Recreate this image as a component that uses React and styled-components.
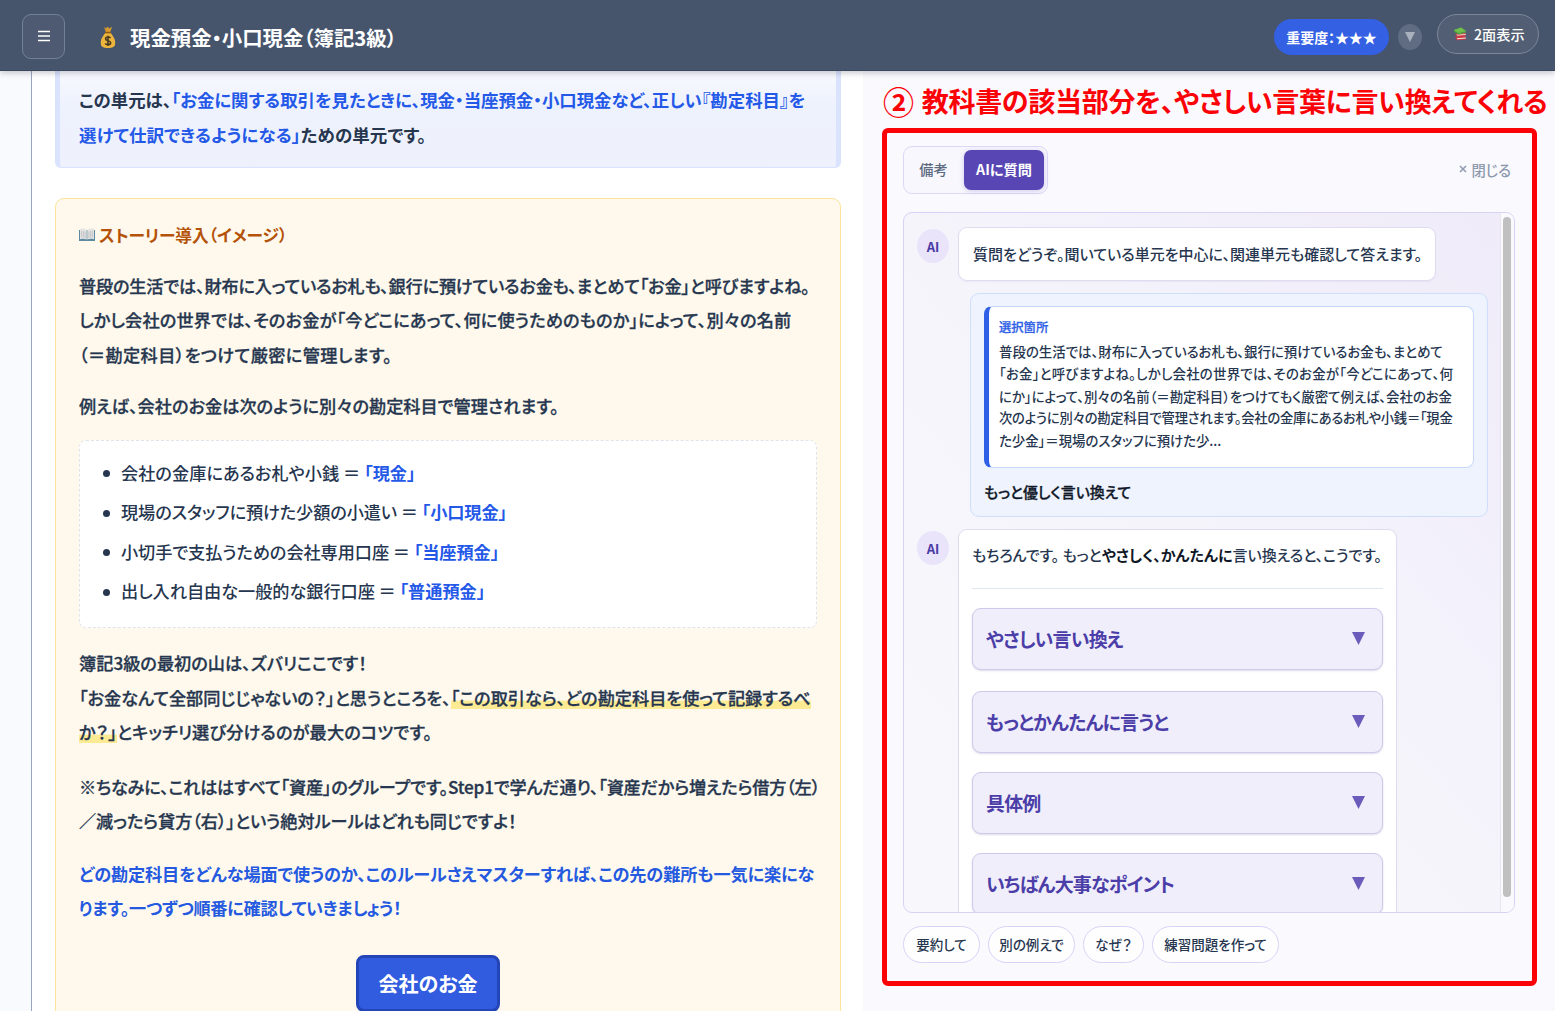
import React from "react";
import styled, { createGlobalStyle } from "styled-components";

const Global = createGlobalStyle`
  *, *::before, *::after { box-sizing: border-box; }
  body {
    margin: 0;
    overflow: hidden;
    font-family: "Noto Sans CJK JP", sans-serif;
    font-feature-settings: "palt";
    color: #26364f;
    background: #fff;
  }
  button { font: inherit; font-feature-settings: inherit; color: inherit; margin: 0; padding: 0; }
  svg { display: block; flex: none; }
`;

const Page = styled.div`
  height: 1011px;
  display: flex;
  flex-direction: column;
  overflow: hidden;
`;

/* ---------- header ---------- */
const Header = styled.header`
  flex: none;
  height: 71px;
  display: flex;
  align-items: flex-start;
  padding: 14px 16px 0 22px;
  background: #46546c;
  border-bottom: 1px solid #3a4860;
  box-shadow: 0 2px 6px rgba(60, 60, 80, 0.28);
  position: relative;
  z-index: 2;
  color: #fff;
`;
const MenuButton = styled.button`
  width: 43px;
  height: 45px;
  display: grid;
  place-items: center;
  padding-bottom: 2px;
  border: 1px solid #748096;
  border-radius: 9px;
  background: #4d5a71;
`;
const BagSlot = styled.span`
  margin: 12px 0 0 35px;
`;
const Title = styled.h1`
  flex: 1;
  margin: 8px 0 0 14px;
  font-size: 20.4px;
  font-weight: 700;
  line-height: 30px;
  white-space: nowrap;
`;
const Importance = styled.span`
  width: 115px;
  height: 36px;
  margin-top: 5px;
  display: flex;
  align-items: center;
  justify-content: center;
  border-radius: 18px;
  background: #3460e4;
  font-size: 14px;
  font-weight: 700;
  letter-spacing: -0.1px;
  white-space: nowrap;
`;
const RoundToggle = styled.button`
  width: 24px;
  height: 26px;
  margin: 10px 15px 0 9px;
  display: grid;
  place-items: center;
  border: 0;
  border-radius: 50%;
  background: #606c81;
`;
const DualView = styled.button`
  width: 102px;
  height: 40px;
  display: flex;
  align-items: center;
  padding-left: 16px;
  gap: 7px;
  border: 1px solid #7c8799;
  border-radius: 20px;
  background: #525e73;
  font-size: 14.2px;
  font-weight: 500;
  white-space: nowrap;
`;

/* ---------- body ---------- */
const Body = styled.div`
  flex: 1;
  min-height: 0;
  display: flex;
`;
const Gutter = styled.div`
  flex: none;
  width: 32px;
  background: #f9fafd;
  border-right: 1px solid #9aa6c0;
`;
const Lesson = styled.main`
  flex: none;
  width: 831px;
  padding: 0 22px 0 23px;
  background: #fff;
  overflow: hidden;
`;
const GoalBox = styled.section`
  height: 97px;
  padding: 11px 0 0 19px;
  border: solid #d9e3fd;
  border-width: 0 5px 1px;
  border-radius: 0 0 6px 6px;
  background: linear-gradient(#f8f9fe, #eef2fd 35%, #eef1fc);
`;
const Line = styled.div`
  height: ${(p) => p.$h || 34.3}px;
  line-height: ${(p) => p.$h || 34.3}px;
  font-size: ${(p) => p.$s || 17.2}px;
  font-weight: ${(p) => p.$w || 500};
  letter-spacing: ${(p) => p.$ls || 0}px;
  color: ${(p) => p.$c || "inherit"};
  -webkit-text-stroke: ${(p) => p.$k || 0}px;
  white-space: nowrap;
`;
const Strong = styled.b`
  font-weight: 700;
  color: #101828;
`;
const Blue = styled.b`
  font-weight: 700;
  color: #2459e8;
  -webkit-text-stroke: 0;
`;
const StoryCard = styled.section`
  height: 900px;
  margin-top: 30px;
  padding: 19px 23px 0;
  border: 1px solid #fce49a;
  border-radius: 9px;
  background: #fef9ec;
`;
const StoryHeading = styled.h2`
  margin: 0 0 18px;
  height: 33px;
  display: flex;
  align-items: center;
  gap: 4px;
  font-size: 16.7px;
  font-weight: 700;
  color: #b45209;
  white-space: nowrap;
`;
const Paragraph = styled.div`
  margin-bottom: ${(p) => p.$mb}px;
`;
const AccountList = styled.ul`
  height: 188px;
  margin: 0 0 18px;
  padding: 12px 0 0 23px;
  list-style: none;
  border: 1px dashed #dfe3ea;
  border-radius: 7px;
  background: #fff;
`;
const Account = styled.li`
  display: flex;
  align-items: center;
  gap: 11px;
  height: 39.4px;
  &::before {
    content: "";
    width: 7px;
    height: 7px;
    border-radius: 50%;
    background: #26364f;
    margin-top: 2px;
  }
`;
const Marker = styled.mark`
  color: inherit;
  padding: 0;
  background: linear-gradient(transparent 58%, #fdeb94 62%) 0 3px / 100% 21px no-repeat;
`;
const MoneyButton = styled.button`
  display: block;
  width: 144px;
  height: 57px;
  margin-left: 277px;
  border: 3px solid #2445b8;
  border-radius: 8px;
  background: #325ce0;
  color: #fff;
  font-size: 20px;
  font-weight: 700;
`;

/* ---------- right pane ---------- */
const Side = styled.aside`
  flex: 1;
  min-width: 0;
  padding: 10px 0 0 19px;
  background: #faf9fe;
`;
const Callout = styled.p`
  display: flex;
  align-items: center;
  gap: 8px;
  margin: 0 0 7px 1px;
  height: 40px;
  line-height: 38px;
  font-size: 27px;
  font-weight: 700;
  letter-spacing: -0.28px;
  color: #fb0207;
  white-space: nowrap;
`;
const CalloutNumber = styled.span`
  font-size: 31px;
`;
const Frame = styled.section`
  width: 655px;
  height: 858px;
  padding: 13px 15px 0 16px;
  border: 5px solid #fb0207;
  border-radius: 6px;
  background: #faf9fe;
`;
const Toolbar = styled.div`
  display: flex;
  justify-content: space-between;
  align-items: center;
  padding-right: 6px;
`;
const Tabs = styled.div`
  width: 145px;
  height: 48px;
  display: flex;
  padding: 3px;
  border: 1px solid #ddd8f6;
  border-radius: 9px;
  background: #f8f7fe;
`;
const Tab = styled.button`
  width: ${(p) => (p.$on ? 80 : 57)}px;
  height: 40px;
  padding: 0 ${(p) => (p.$on ? 0 : 4)}px 2px 0;
  border: 0;
  border-radius: 7px;
  background: ${(p) => (p.$on ? "#5746b4" : "transparent")};
  color: ${(p) => (p.$on ? "#fff" : "#5c6a80")};
  font-size: 14.2px;
  font-weight: ${(p) => (p.$on ? 700 : 500)};
  box-shadow: ${(p) => (p.$on ? "0 1px 5px rgba(87,70,180,.25)" : "none")};
  white-space: nowrap;
`;
const Close = styled.button`
  display: flex;
  align-items: center;
  gap: 4px;
  padding-bottom: 2px;
  border: 0;
  background: none;
  font-size: 14.3px;
  font-weight: 500;
  color: #8e9aae;
`;
const Chat = styled.div`
  width: 612px;
  height: 701px;
  margin-top: 18px;
  display: flex;
  border: 1px solid #d8d3f4;
  border-radius: 9px;
  background: linear-gradient(to top right, #f8f8fc 0%, #f5f4fb 50%, #efebf9 100%);
  overflow: hidden;
`;
const Messages = styled.div`
  flex: 1;
  min-width: 0;
  padding: 14px 12px 0 13px;
  overflow: hidden;
`;
const Track = styled.div`
  flex: none;
  width: 14px;
  padding: 4px 2px 0 2px;
  background: #faf9fd;
  border-left: 1px solid #e7e5ee;
`;
const Thumb = styled.div`
  width: 8px;
  height: 680px;
  border-radius: 4px;
  background: #c0c0c0;
`;
const MessageRow = styled.div`
  display: flex;
  gap: 9px;
  align-items: flex-start;
`;
const Avatar = styled.span`
  flex: none;
  width: 32px;
  height: 34px;
  margin-top: 2px;
  display: grid;
  place-items: center;
  border-radius: 50%;
  background: #e9e4fa;
  color: #4b3aa6;
  font-size: 13px;
  font-weight: 700;
`;
const Bubble = styled.div`
  flex: none;
  width: ${(p) => p.$width}px;
  height: ${(p) => p.$height}px;
  padding: 0 13px 0 ${(p) => p.$pl}px;
  border: 1px solid #e0dcf0;
  border-radius: 9px;
  background: #fff;
  box-shadow: 0 1px 2px rgba(80, 70, 140, 0.06);
`;
const UserBubble = styled.div`
  width: 518px;
  height: 224px;
  margin: 12px 0 12px 53px;
  padding: 12px 13px 0;
  border: 1px solid #cfdffb;
  border-radius: 9px;
  background: #eef3fd;
`;
const Quote = styled.blockquote`
  height: 162px;
  margin: 0 0 7px;
  padding: 11px 0 0 10px;
  border: 1px solid #c6d9fb;
  border-left: 5px solid #2f5fe6;
  border-radius: 8px;
  background: #fff;
`;
const QuoteText = styled.div`
  padding-top: 3px;
`;
const Rule = styled.hr`
  height: 1px;
  margin: 8px 0 19px;
  border: 0;
  background: #e0e6ef;
`;
const Accordion = styled.button`
  width: 411px;
  height: 62px;
  margin-bottom: ${(p) => p.$mb}px;
  padding: 0 17px 2px 13px;
  display: flex;
  justify-content: space-between;
  align-items: center;
  border: 1px solid #cdcaea;
  border-radius: 9px;
  background: #f1eefb;
  box-shadow: 0 1px 2px rgba(80, 70, 150, 0.2);
  color: #4b3ea8;
  font-size: 19px;
  font-weight: 700;
  letter-spacing: -0.84px;
`;
const Chips = styled.div`
  margin-top: 13px;
  display: flex;
  gap: 8px;
`;
const Chip = styled.button`
  width: ${(p) => p.$width}px;
  height: 37px;
  padding-bottom: 2px;
  border: 1px solid #d9d2f7;
  border-radius: 19px;
  background: #fefeff;
  font-size: 13.5px;
  font-weight: 500;
  white-space: nowrap;
`;

/* ---------- icons ---------- */
const Triangle = ({ size, color }) => (
  <svg width={size} height={size} viewBox="0 0 12 12">
    <path d="M0 0H12L6 12Z" fill={color} />
  </svg>
);
const MoneyBag = () => (
  <svg width="16" height="23" viewBox="0 0 16 23">
    <path d="M4 1L6 2.5L7.5 .6L9 2.5L12 .8L10.3 6H5.8Z" fill="#d99a2b" />
    <path d="M5.5 6.5H10.5C12 9 15.5 12 15.2 17.5C15 21 12.5 22 8 22S1 21 .8 17.5C.5 12 4 9 5.5 6.5Z" fill="#eeb53c" />
    <path d="M5 6.6H11" stroke="#8a5a16" strokeWidth="1.5" />
    <path d="M10.6 12C9.5 10.6 5.6 10.6 5.6 13C5.6 15.2 10.7 14.4 10.7 16.8C10.7 19.2 6.4 19.2 5.2 17.6M8 9.7V20" fill="none" stroke="#4a3b24" strokeWidth="1.6" />
  </svg>
);
const OpenBook = () => (
  <svg width="16" height="14" viewBox="0 0 16 14">
    <path d="M0 2H16V13H0Z" fill="#5e8aa0" />
    <path d="M1 1C3.5 .2 6 .5 7.7 1.8V11.6C6 10.6 3.5 10.6 1 11.2ZM15 1C12.500 .2 10 .5 8.300 1.8V11.6C10 10.6 12.500 10.6 15 11.2Z" fill="#e6e4e3" />
    <path d="M2.600 3V9.500M4.400 3V9.500M6.100 3.500V10M9.900 3.500V10M11.600 3V9.500M13.400 3V9.500" stroke="#b4b7bd" strokeWidth=".7" />
  </svg>
);
const Books = () => (
  <svg width="13" height="14" viewBox="0 0 13 14">
    <path d="M1 9.500L11 8.500L12 12.500L3 13.300Z" fill="#c93a45" />
    <path d="M3 11.200L12 10.400V11.400L3.200 12.200Z" fill="#f2e6df" />
    <path d="M1.500 6.500L11.500 6L12 8.500L3 9.500Z" fill="#d9505a" />
    <path d="M3 7.800L11.800 7V7.800L3 8.600Z" fill="#f2e6df" />
    <path d="M0 3L7 .5L12 4L12 5.500L4.500 7.500L0 4.500Z" fill="#4c9d3d" />
    <path d="M0 3L7 .5L12 4L4.500 6Z" fill="#71c04e" />
  </svg>
);
const Cross = () => (
  <svg width="8" height="8" viewBox="0 0 8 8" stroke="#8e9aae" strokeWidth="1.5">
    <path d="M1 1L7 7M7 1L1 7" />
  </svg>
);

const accounts = [
  ["会社の金庫にあるお札や小銭 ＝ ", "「現金」", 0],
  ["現場のスタッフに預けた少額の小遣い ＝ ", "「小口現金」", -0.1],
  ["小切手で支払うための会社専用口座 ＝ ", "「当座預金」", -0.08],
  ["出し入れ自由な一般的な銀行口座 ＝ ", "「普通預金」", -0.05],
];
const sections = [
  ["やさしい言い換え", 21],
  ["もっとかんたんに言うと", 19],
  ["具体例", 19],
  ["いちばん大事なポイント", 19],
];
const chips = [
  ["要約して", 77],
  ["別の例えで", 87],
  ["なぜ？", 61],
  ["練習問題を作って", 127],
];

export default function App() {
  return (
    <Page>
      <Global />
      <Header>
        <MenuButton aria-label="menu">
          <svg width="12" height="12" viewBox="0 0 12 12" stroke="#fff" strokeWidth="1.4">
            <path d="M0 1.5H12M0 6H12M0 10.5H12" />
          </svg>
        </MenuButton>
        <BagSlot>
          <MoneyBag />
        </BagSlot>
        <Title>現金預金・小口現金（簿記3級）</Title>
        <Importance>重要度：★★★</Importance>
        <RoundToggle>
          <Triangle size={10} color="#a9b1be" />
        </RoundToggle>
        <DualView>
          <Books />
          2面表示
        </DualView>
      </Header>
      <Body>
        <Gutter />
        <Lesson>
          <GoalBox>
            <Line $h={35} $s={17.4} $w={700}>
              この単元は、<Blue>「お金に関する取引を見たときに、現金・当座預金・小口現金など、正しい『勘定科目』を</Blue>
            </Line>
            <Line $h={35} $s={17.5} $ls={0.08} $w={700}>
              <Blue>選けて仕訳できるようになる」</Blue>ための単元です。
            </Line>
          </GoalBox>
          <StoryCard>
            <StoryHeading>
              <OpenBook />
              ストーリー導入（イメージ）
            </StoryHeading>
            <Paragraph $mb={17}>
              <Line $k={0.3} $ls={-0.19}>普段の生活では、財布に入っているお札も、銀行に預けているお金も、まとめて「お金」と呼びますよね。</Line>
              <Line $k={0.3} $ls={0.14}>しかし会社の世界では、そのお金が「今どこにあって、何に使うためのものか」によって、別々の名前</Line>
              <Line $k={0.3} $ls={0.36}>（＝勘定科目）をつけて厳密に管理します。</Line>
            </Paragraph>
            <Paragraph $mb={17}>
              <Line $k={0.3}>例えば、会社のお金は次のように別々の勘定科目で管理されます。</Line>
            </Paragraph>
            <AccountList>
              {accounts.map(([text, name, ls]) => (
                <Account key={name}>
                  <Line $ls={ls}>
                    {text}
                    <Blue>{name}</Blue>
                  </Line>
                </Account>
              ))}
            </AccountList>
            <Paragraph $mb={20.5}>
              <Line $h={34.5} $k={0.3}>簿記3級の最初の山は、ズバリここです！</Line>
              <Line $h={34.2} $k={0.3} $ls={-0.03}>
                「お金なんて全部同じじゃないの？」と思うところを、
                <Marker>「この取引なら、どの勘定科目を使って記録するべ</Marker>
              </Line>
              <Line $h={34.8} $k={0.3} $ls={0.13}>
                <Marker>か？」</Marker>とキッチリ選び分けるのが最大のコツです。
              </Line>
            </Paragraph>
            <Paragraph $mb={19}>
              <Line $h={33.8} $k={0.3} $ls={-0.2}>※ちなみに、これははすべて「資産」のグループです。Step1で学んだ通り、「資産だから増えたら借方（左）</Line>
              <Line $h={33.8} $k={0.3} $ls={-0.07}>／減ったら貸方（右）」という絶対ルールはどれも同じですよ！</Line>
            </Paragraph>
            <Paragraph $mb={29.5}>
              <Line $w={700} $c="#2459e0" $ls={-0.15}>どの勘定科目をどんな場面で使うのか、このルールさえマスターすれば、この先の難所も一気に楽にな</Line>
              <Line $w={700} $c="#2459e0" $ls={-0.31}>ります。一つずつ順番に確認していきましょう！</Line>
            </Paragraph>
            <MoneyButton>会社のお金</MoneyButton>
          </StoryCard>
        </Lesson>
        <Side>
          <Callout>
            <CalloutNumber>②</CalloutNumber>
            教科書の該当部分を、やさしい言葉に言い換えてくれる
          </Callout>
          <Frame>
            <Toolbar>
              <Tabs>
                <Tab>備考</Tab>
                <Tab $on>AIに質問</Tab>
              </Tabs>
              <Close>
                <Cross />
                閉じる
              </Close>
            </Toolbar>
            <Chat>
              <Messages>
                <MessageRow>
                  <Avatar>AI</Avatar>
                  <Bubble $width={478} $height={54} $pl={14}>
                    <Line $h={51} $s={15}>質問をどうぞ。聞いている単元を中心に、関連単元も確認して答えます。</Line>
                  </Bubble>
                </MessageRow>
                <UserBubble>
                  <Quote>
                    <Line $h={19} $s={12.3} $c="#2f5fe6" $k={0.25}>選択箇所</Line>
                    <QuoteText>
                      <Line $h={22.3} $s={13.45}>普段の生活では、財布に入っているお札も、銀行に預けているお金も、まとめて</Line>
                      <Line $h={22.3} $s={13.45} $ls={0.22}>「お金」と呼びますよね。しかし会社の世界では、そのお金が「今どこにあって、何</Line>
                      <Line $h={22.3} $s={13.45} $ls={-0.05}>にか」によって、別々の名前（＝勘定科目）をつけてもく厳密て例えば、会社のお金</Line>
                      <Line $h={22.3} $s={13.3} $ls={-0.24}>次のように別々の勘定科目で管理されます。会社の金庫にあるお札や小銭＝「現金</Line>
                      <Line $h={22.3} $s={13.4} $ls={0}>た少金」＝現場のスタッフに預けた少...</Line>
                    </QuoteText>
                  </Quote>
                  <Line $h={34} $s={14.9} $c="#101828" $k={0.3}>もっと優しく言い換えて</Line>
                </UserBubble>
                <MessageRow>
                  <Avatar>AI</Avatar>
                  <Bubble $width={439} $height={480} $pl={13}>
                    <Line $h={50} $s={15} $ls={-0.03}>
                      もちろんです。 もっと<Strong>やさしく、かんたんに</Strong>言い換えると、こうです。
                    </Line>
                    <Rule />
                    {sections.map(([name, mb]) => (
                      <Accordion key={name} $mb={mb}>
                        {name}
                        <Triangle size={13} color="#6b5cbb" />
                      </Accordion>
                    ))}
                  </Bubble>
                </MessageRow>
              </Messages>
              <Track>
                <Thumb />
              </Track>
            </Chat>
            <Chips>
              {chips.map(([label, width]) => (
                <Chip key={label} $width={width}>{label}</Chip>
              ))}
            </Chips>
          </Frame>
        </Side>
      </Body>
    </Page>
  );
}
